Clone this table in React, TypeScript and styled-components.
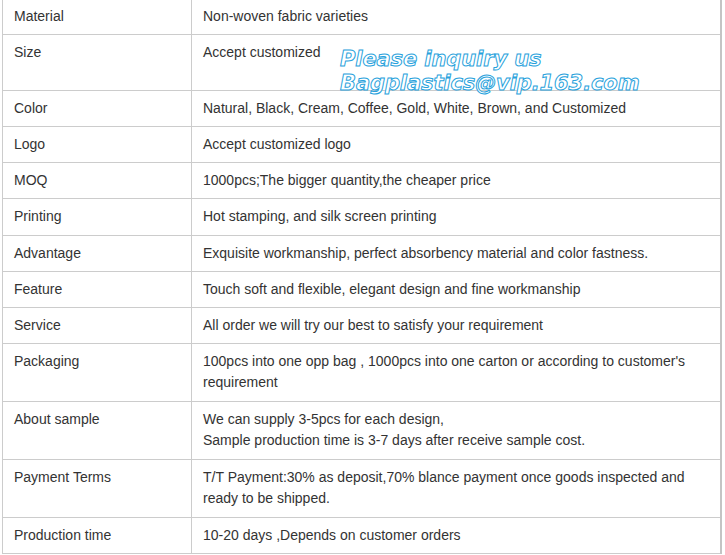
import React from "react";
import styled, { createGlobalStyle } from "styled-components";

const Global = createGlobalStyle`
  html, body { margin: 0; padding: 0; background: #ffffff; }
  body { font-family: "Liberation Sans", Arial, sans-serif; }
`;

const Page = styled.div`
  padding-left: 2px;
  margin-top: -2px;
`;

const Table = styled.table`
  width: 720px;
  border-collapse: collapse;
  table-layout: fixed;
  font-family: "Liberation Sans", Arial, sans-serif;
  font-size: 14px;
  line-height: 21px;
  color: #333333;
`;

const Row = styled.tr<{ $h: number }>`
  height: ${(p) => p.$h}px;
`;

const Label = styled.td`
  padding: 7px 11px 7px 11px;
  border: 1px solid #cccccc;
  vertical-align: top;
`;

const Value = styled.td`
  position: relative;
  padding: 7px 11px 7px 11px;
  border: 1px solid #cccccc;
  border-right: 2px solid #c4c4c4;
  vertical-align: top;
`;

const Watermark = styled.div`
  position: absolute;
  left: 148px;
  top: 12px;
  font-family: "DejaVu Sans", Verdana, sans-serif;
  font-style: oblique;
  font-weight: bold;
  font-size: 21px;
  line-height: 24px;
  letter-spacing: -0.1px;
  color: #ffffff;
  -webkit-text-stroke: 1px #28a2dc;
  white-space: nowrap;
  pointer-events: none;
`;

type Item = { label: string; value: React.ReactNode; h: number; mark?: boolean };

const items: Item[] = [
  { label: "Material", value: "Non-woven fabric varieties", h: 36 },
  { label: "Size", value: "Accept customized", h: 56, mark: true },
  { label: "Color", value: "Natural, Black, Cream, Coffee, Gold, White, Brown, and Customized", h: 36 },
  { label: "Logo", value: "Accept customized logo", h: 36 },
  { label: "MOQ", value: "1000pcs;The bigger quantity,the cheaper price", h: 36 },
  { label: "Printing", value: "Hot stamping, and silk screen printing", h: 37 },
  { label: "Advantage", value: "Exquisite workmanship, perfect absorbency material and color fastness.", h: 36 },
  { label: "Feature", value: "Touch soft and flexible, elegant design and fine workmanship", h: 36 },
  { label: "Service", value: "All order we will try our best to satisfy your requirement", h: 36 },
  {
    label: "Packaging",
    h: 58,
    value: (
      <>
        100pcs into one opp bag , 1000pcs into one carton or according to customer's
        <br />
        requirement
      </>
    ),
  },
  {
    label: "About sample",
    h: 58,
    value: (
      <>
        We can supply 3-5pcs for each design,
        <br />
        Sample production time is 3-7 days after receive sample cost.
      </>
    ),
  },
  {
    label: "Payment Terms",
    h: 58,
    value: (
      <>
        T/T Payment:30% as deposit,70% blance payment once goods inspected and
        <br />
        ready to be shipped.
      </>
    ),
  },
  { label: "Production time", value: "10-20 days ,Depends on customer orders", h: 36 },
];

export default function App() {
  return (
    <>
      <Global />
      <Page>
        <Table>
          <colgroup>
            <col style={{ width: 189 }} />
            <col />
          </colgroup>
          <tbody>
            {items.map((it) => (
              <Row key={it.label} $h={it.h}>
                <Label>{it.label}</Label>
                <Value>
                  {it.value}
                  {it.mark && (
                    <Watermark>
                      Please inquiry us
                      <br />
                      Bagplastics@vip.163.com
                    </Watermark>
                  )}
                </Value>
              </Row>
            ))}
          </tbody>
        </Table>
      </Page>
    </>
  );
}
